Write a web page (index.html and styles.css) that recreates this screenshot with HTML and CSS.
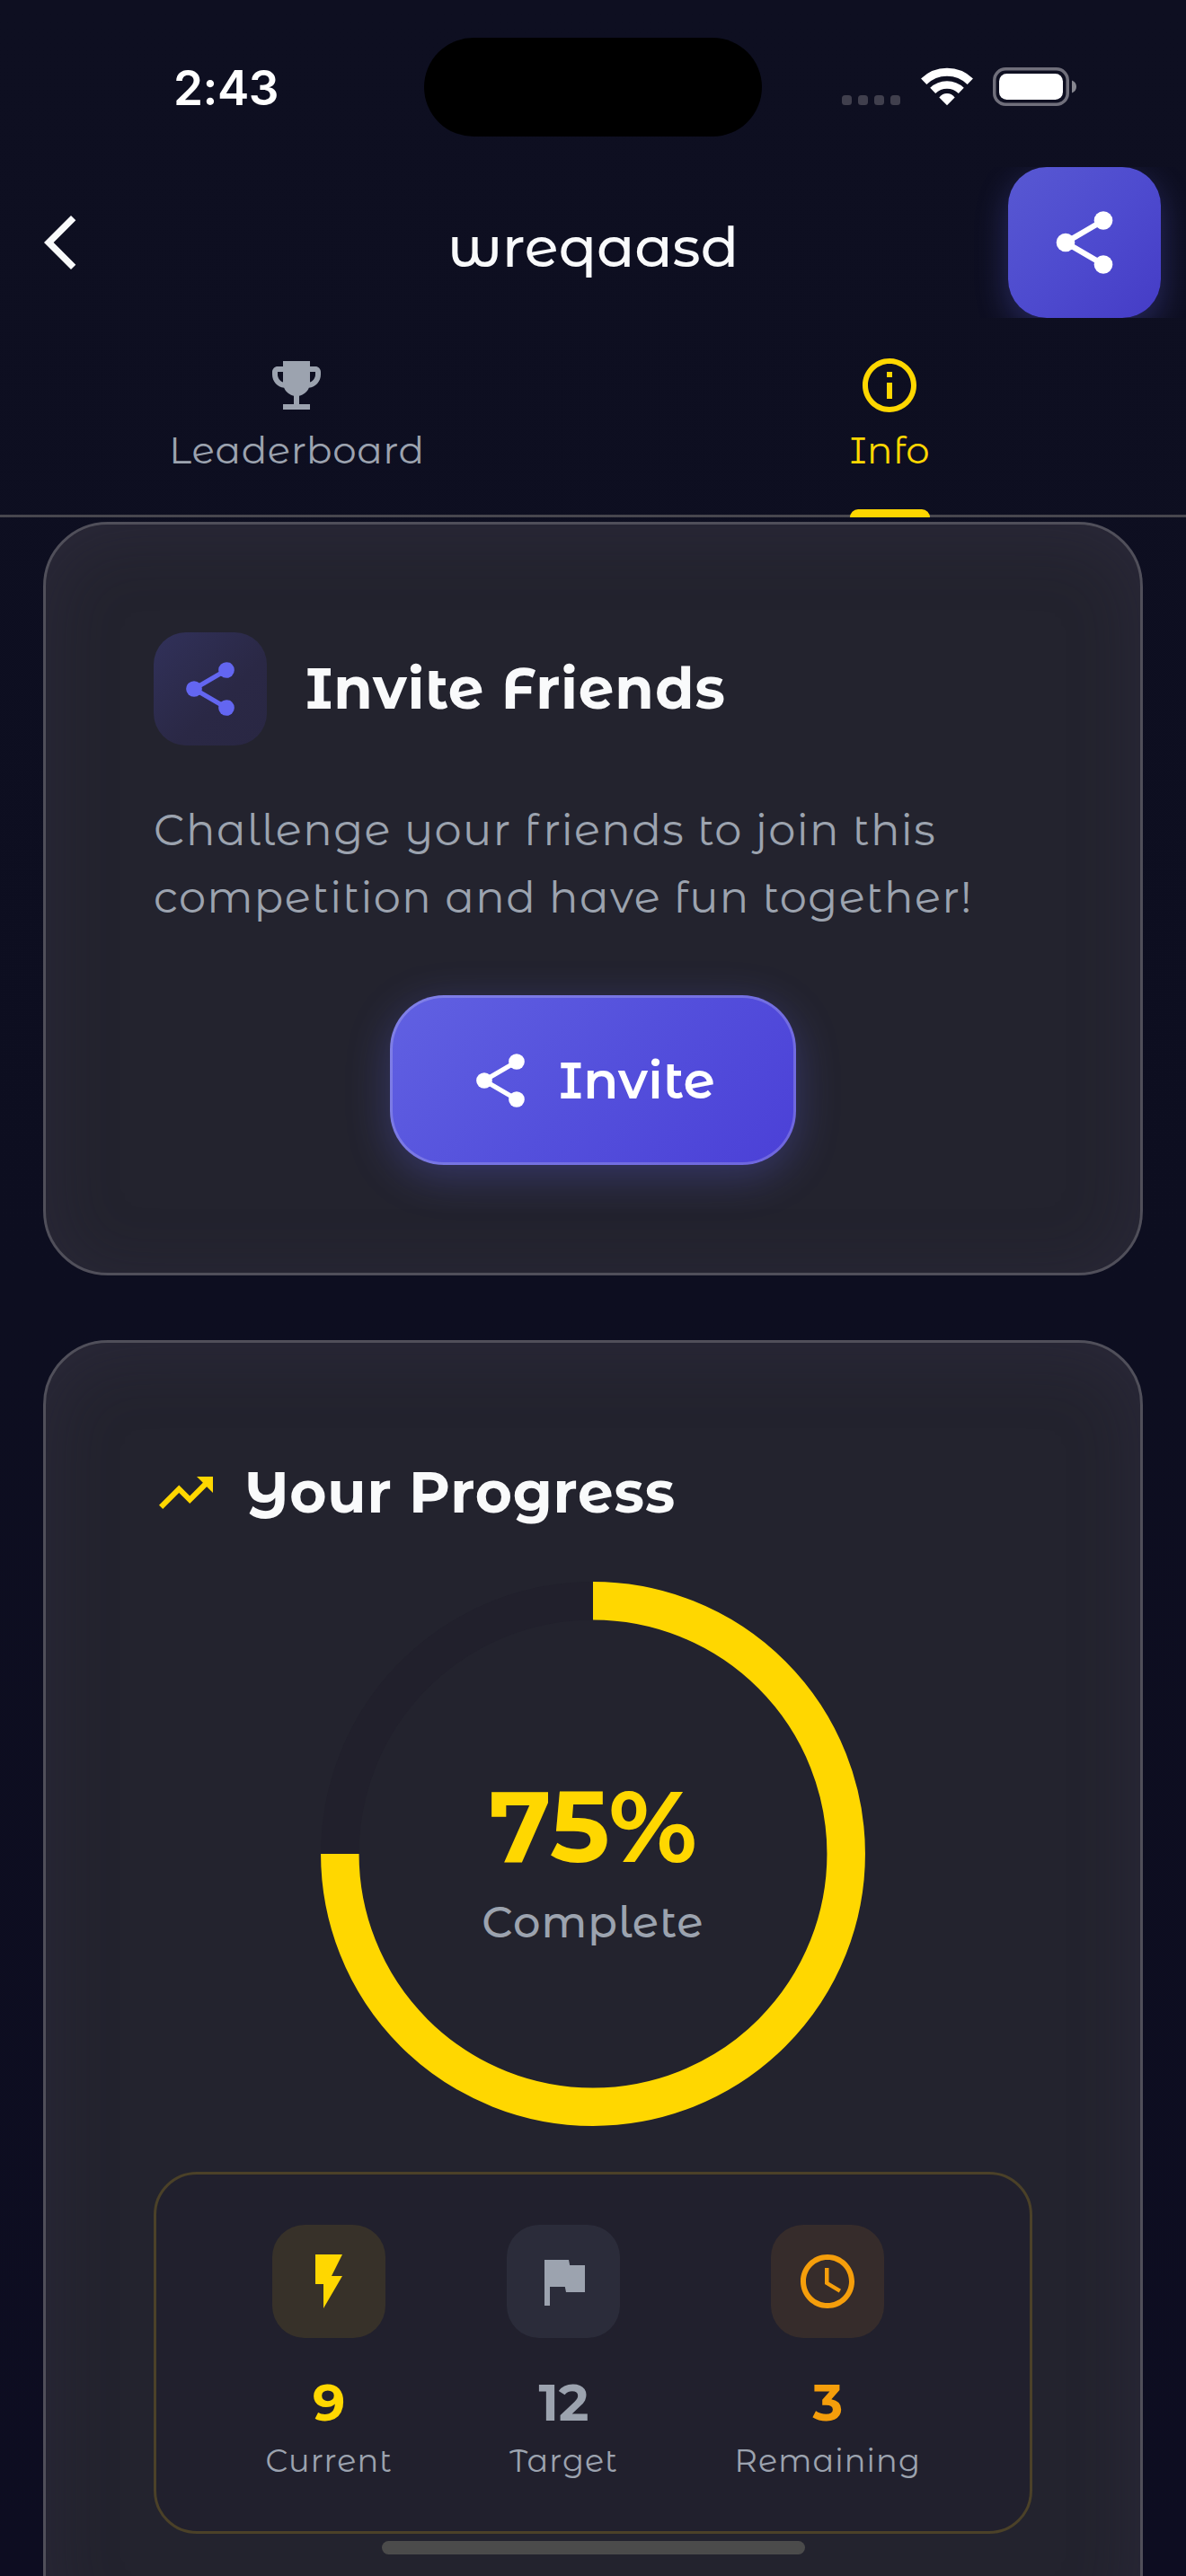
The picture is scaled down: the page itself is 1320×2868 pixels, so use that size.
FILE: index.html
```html
<!DOCTYPE html>
<html lang="en">
<head>
<meta charset="utf-8">
<title>wreqaasd</title>
<link rel="stylesheet" href="styles.css">
</head>
<body>
<svg class="defs" width="0" height="0">
  <symbol id="share" viewBox="0 0 24 24"><path d="M6 12 18 5M6 12l12 7" fill="none" stroke="currentColor" stroke-width="1.75"/><g fill="currentColor"><circle cx="18" cy="5" r="2.95"/><circle cx="6" cy="12" r="2.95"/><circle cx="18" cy="19" r="2.95"/></g></symbol>
</svg>
<div class="screen">
  <div class="status">
    <div class="clock">2:43</div>
    <div class="island"></div>
    <div class="signals">
      <div class="dots"><i></i><i></i><i></i><i></i></div>
      <svg class="wifi" viewBox="0 0 58 43" fill="none" stroke="#fff">
        <path d="M3.2 15.8a37 37 0 0 1 51.6 0" stroke-width="9"/>
        <path d="M13.2 25.8a22.8 22.8 0 0 1 31.6 0" stroke-width="8.6"/>
        <path d="M29 42.2 20.3 33.4Q24 29 29 29t8.7 4.4Z" fill="#fff" stroke="none"/>
      </svg>
      <svg class="battery" viewBox="0 0 94 43">
        <rect x="1.75" y="1.75" width="81.5" height="39.5" rx="12.5" fill="none" stroke="#706f7b" stroke-width="3.5"/>
        <rect x="7" y="7" width="71" height="29" rx="8.5" fill="#fff"/>
        <path d="M88 14.5c3.300 1.200 5 4 5 7s-1.700 5.800-5 7z" fill="#86868f"/>
      </svg>
    </div>
  </div>

  <div class="nav">
    <svg class="icon back" viewBox="0 0 24 24"><path fill="currentColor" d="M17.770 3.770 16 2 6 12l10 10 1.770-1.770L9.540 12z"/></svg>
    <h1 class="title">wreqaasd</h1>
    <button class="share-btn"><svg class="icon-lg"><use href="#share"/></svg></button>
  </div>

  <div class="tabs">
    <div class="tab">
      <svg class="icon" viewBox="0 0 24 24"><path fill="currentColor" d="M19 5h-2V3H7v2H5c-1.100 0-2 .9-2 2v1c0 2.550 1.920 4.630 4.390 4.940.63 1.500 1.980 2.630 3.610 2.960V19H7v2h10v-2h-4v-3.100c1.630-.33 2.980-1.460 3.610-2.960C19.080 12.630 21 10.550 21 8V7c0-1.100-.9-2-2-2zM5 8V7h2v3.820C5.840 10.400 5 9.300 5 8zm14 0c0 1.300-.84 2.400-2 2.820V7h2v1z"/></svg>
      <span class="tab-label">Leaderboard</span>
    </div>
    <div class="tab active">
      <svg class="icon" viewBox="0 0 24 24"><path fill="currentColor" d="M11 7h2v2h-2zm0 4h2v6h-2zm1-9C6.480 2 2 6.480 2 12s4.480 10 10 10 10-4.480 10-10S17.520 2 12 2zm0 18c-4.410 0-8-3.590-8-8s3.590-8 8-8 8 3.590 8 8-3.590 8-8 8z"/></svg>
      <span class="tab-label">Info</span>
    </div>
  </div>

  <div class="content">
    <section class="card">
      <div class="card-head">
        <div class="badge indigo"><svg class="icon"><use href="#share"/></svg></div>
        <h2 class="invite-title">Invite Friends</h2>
      </div>
      <p class="copy">Challenge your friends to join this<br>competition and have fun together!</p>
      <button class="invite"><svg class="icon"><use href="#share"/></svg><span>Invite</span></button>
    </section>

    <section class="card">
      <div class="card-head progress-head">
        <svg class="icon gold" viewBox="0 0 24 24"><path fill="currentColor" d="m16 6 2.290 2.290-4.880 4.880-4-4L2 16.590 3.410 18l6-6 4 4 6.300-6.290L22 12V6z"/></svg>
        <h2 class="progress-title">Your Progress</h2>
      </div>
      <div class="ring">
        <svg class="ring-svg" viewBox="0 0 606 606" fill="none" stroke-width="42.500">
          <circle cx="303" cy="303" r="281.700" stroke="#21202c"/>
          <path d="M303 21.300A281.700 281.700 0 1 1 21.300 303" stroke="#ffd700"/>
        </svg>
        <div class="ring-text">
          <span class="percent">75%</span>
          <span class="complete">Complete</span>
        </div>
      </div>
      <div class="stats">
        <div class="stat current">
          <div class="badge"><svg class="icon" viewBox="0 0 24 24"><path fill="currentColor" d="M7 2v11h3v9l7-12h-4l4-8z"/></svg></div>
          <span class="num">9</span><span class="label">Current</span>
        </div>
        <div class="stat target">
          <div class="badge"><svg class="icon" viewBox="0 0 24 24"><path fill="currentColor" d="M14.400 6 14 4H5v17h2v-7h5.600l.4 2h7V6z"/></svg></div>
          <span class="num">12</span><span class="label">Target</span>
        </div>
        <div class="stat remaining">
          <div class="badge"><svg class="icon" viewBox="0 0 24 24"><path fill="currentColor" d="M11.990 2C6.470 2 2 6.480 2 12s4.470 10 9.990 10C17.520 22 22 17.520 22 12S17.520 2 11.990 2zM12 20c-4.420 0-8-3.580-8-8s3.580-8 8-8 8 3.580 8 8-3.580 8-8 8zm.5-13H11v6l5.250 3.150.75-1.230-4.500-2.670z"/></svg></div>
          <span class="num">3</span><span class="label">Remaining</span>
        </div>
      </div>
    </section>
  </div>
  <div class="home-bar"></div>
</div>
</body>
</html>
```
FILE: styles.css
```css
* { box-sizing: border-box; }

body {
  margin: 0;
  background: #0e0f21;
  color: #f9fafb;
  font-family: "Montserrat Alternates", Inter, "Open Sans", sans-serif;
}

h1, h2, p { margin: 0; }
button { font: inherit; color: #fff; border: 0; padding: 0; }
svg { display: block; flex: none; }
.defs { position: absolute; }
.icon { width: 72px; height: 72px; }
.icon-lg { width: 84px; height: 84px; }
.gold { color: #ffd700; }

.screen {
  position: relative;
  display: flex;
  flex-direction: column;
  width: 1320px;
  height: 2868px;
  overflow: hidden;
  background: linear-gradient(#0e0f21, #0d0e20 50%, #0d0d21);
}

/* Status bar */
.status {
  display: grid;
  grid-template-columns: 472px 376px 1fr;
  height: 186px;
  padding-top: 42px;
}
.clock {
  padding-left: 193px;
  font: 600 53px/112px Inter, sans-serif;
  letter-spacing: -0.5px;
  color: #fff;
}
.island { height: 110px; border-radius: 55px; background: #000; }
.signals { display: flex; align-items: flex-start; padding: 33px 0 0 89px; }
.dots { display: flex; gap: 7px; margin-top: 31px; }
.dots i { width: 11px; height: 11px; border-radius: 3.500px; background: #403f4d; }
.wifi { width: 58px; height: 43px; margin-left: 22.500px; }
.battery { width: 94px; height: 43px; margin-left: 22.500px; }

/* Navigation bar */
.nav {
  display: grid;
  grid-template-columns: 198px 1fr 198px;
  align-items: center;
  height: 168px;
  overflow: hidden;
}
.back { margin-left: 30.500px; }
.title {
  padding-top: 9px;
  text-align: center;
  font-size: 62px;
  line-height: 80px;
  font-weight: 500;
}
.share-btn {
  display: grid;
  place-items: center;
  width: 170px;
  height: 168px;
  border-radius: 43px;
  background: linear-gradient(135deg, #5757d2 5%, #4e4bcf 50%, #453cc6);
  box-shadow: 0 12px 36px rgba(99, 102, 241, .3);
}

/* Tabs */
.tabs {
  display: grid;
  grid-template-columns: 1fr 1fr;
  flex: none;
  height: 222px;
  border-bottom: 3px solid #47464e;
}
.tab {
  position: relative;
  display: flex;
  flex-direction: column;
  align-items: center;
  padding-top: 39px;
  color: #9ca3af;
}
.tab-label {
  padding-left: 1px;
  font-size: 42px;
  line-height: 72px;
  font-weight: 400;
  letter-spacing: .7px;
}
.tab.active { color: #ffd700; }
.tab.active::after {
  content: "";
  position: absolute;
  bottom: -3px;
  width: 89px;
  height: 9px;
  border-radius: 9px 9px 0 0;
  background: #ffd700;
}

/* Cards */
.content {
  display: flex;
  flex-direction: column;
  gap: 72px;
  flex: 1;
  min-height: 0;
  padding: 5px 48px 0;
}
.card {
  flex: none;
  padding: 120px;
  border: 3px solid #504f5a;
  border-radius: 72px;
  background: #23232e;
  box-shadow: inset 0 12px 80px rgba(58, 54, 82, .3);
}
.card-head { display: flex; align-items: center; }
.card-head h2 {
  padding-bottom: 1px;
  font-size: 63px;
  line-height: 90px;
  font-weight: 700;
  letter-spacing: .8px;
}
.badge {
  display: grid;
  place-items: center;
  flex: none;
  width: 126px;
  height: 126px;
  border-radius: 36px;
}
.indigo { color: #6366f1; background: linear-gradient(135deg, #31315a, #2a2845 60%, #292743); }
.invite-title { margin-left: 43px; }
.copy {
  margin-top: 57px;
  font-size: 48px;
  line-height: 75px;
  font-weight: 400;
  letter-spacing: 1.400px;
  white-space: nowrap;
  color: #9ca3af;
}
.invite {
  display: flex;
  align-items: center;
  gap: 29px;
  width: 452px;
  height: 189px;
  margin: 71px auto 0;
  padding-left: 84px;
  border: 3px solid rgba(255, 255, 255, .2);
  border-radius: 60px;
  background: linear-gradient(135deg, #6161e2, #5450dc 50%, #4b40d7) border-box;
  box-shadow: 0 12px 48px rgba(99, 102, 241, .3);
  font-size: 57px;
  font-weight: 600;
  letter-spacing: .4px;
}

/* Progress */
.progress-head { height: 94px; }
.progress-title { margin-left: 29px; }
.ring { display: grid; justify-content: center; margin-top: 52px; }
.ring > * { grid-area: 1 / 1; }
.ring-svg { width: 606px; height: 606px; }
.ring-text {
  display: flex;
  flex-direction: column;
  align-items: center;
  justify-content: center;
  padding-top: 20px;
}
.percent { font-size: 112px; line-height: 132px; font-weight: 700; color: #ffd700; }
.complete {
  font-size: 48px;
  line-height: 82px;
  font-weight: 500;
  letter-spacing: 1px;
  color: #9ca3af;
}

.stats {
  display: flex;
  justify-content: space-around;
  height: 403px;
  margin-top: 51px;
  padding: 56px 57px 0;
  border: 3px solid #4b4128;
  border-radius: 48px;
  background: #21202d;
}
.stat { display: flex; flex-direction: column; align-items: center; }
.num { margin-top: 39px; font-size: 57px; line-height: 66px; font-weight: 700; }
.label {
  font-size: 35px;
  line-height: 64px;
  font-weight: 400;
  letter-spacing: 1.100px;
  color: #9ca3af;
  white-space: nowrap;
}
.current { width: 141px; color: #ffd700; }
.current .badge { background: #373129; }
.target { width: 123px; color: #9ca3af; }
.target .badge { background: #2b2c3a; }
.remaining { width: 206px; color: #f59e0b; }
.remaining .badge { background: #362c2b; }

.home-bar {
  position: absolute;
  left: 425px;
  bottom: 24px;
  width: 471px;
  height: 15px;
  border-radius: 8px;
  background: #4b4b4b;
}
```
